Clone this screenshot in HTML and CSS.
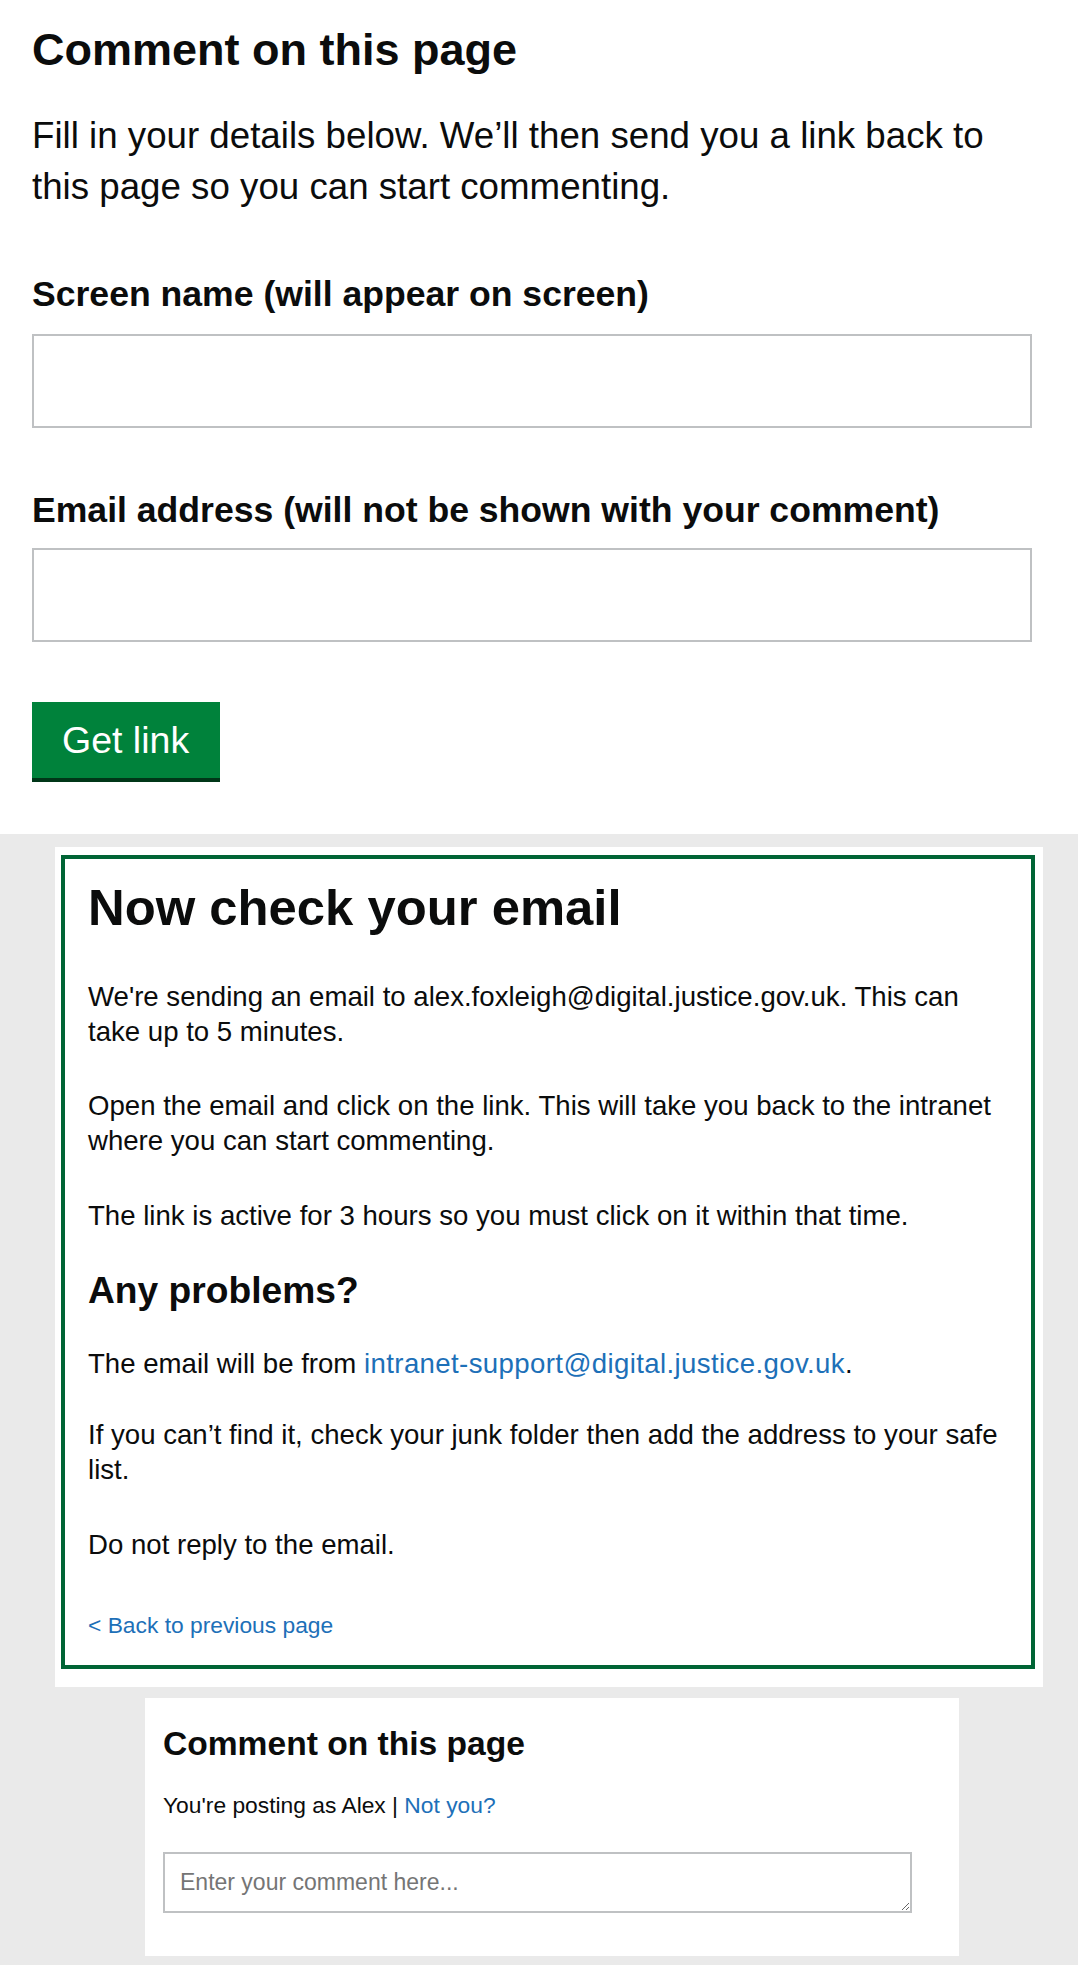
FILE: index.html
```html
<!DOCTYPE html>
<html lang="en">
<head>
<meta charset="utf-8">
<title>Comment on this page</title>
<link rel="stylesheet" href="styles.css">
</head>
<body>
<main>
  <section class="signin">
    <h1 class="signin-title">Comment on this page</h1>
    <p class="lead">Fill in your details below. We’ll then send you a link back to this page so you can start commenting.</p>
    <div class="field">
      <label class="field-label field-label--short" for="screen-name">Screen name (will appear on screen)</label>
      <input class="field-input" id="screen-name" type="text">
    </div>
    <div class="field">
      <label class="field-label field-label--long" for="email">Email address (will not be shown with your comment)</label>
      <input class="field-input field-input--tight" id="email" type="email">
    </div>
    <button class="btn" type="button">Get link</button>
  </section>

  <section class="grey-area">
    <div class="panel">
      <div class="notice">
        <h2 class="notice-title">Now check your email</h2>
        <p class="notice-text notice-text--first">We're sending an email to alex.foxleigh@digital.justice.gov.uk. This can take up to 5 minutes.</p>
        <p class="notice-text notice-text--p2">Open the email and click on the link. This will take you back to the intranet where you can start commenting.</p>
        <p class="notice-text notice-text--p3">The link is active for 3 hours so you must click on it within that time.</p>
        <h3 class="notice-subtitle">Any problems?</h3>
        <p class="notice-text notice-text--p4">The email will be from <a class="link link--email" href="#">intranet-support@digital.justice.gov.uk</a>.</p>
        <p class="notice-text notice-text--p5">If you can’t find it, check your junk folder then add the address to your safe list.</p>
        <p class="notice-text notice-text--p6">Do not reply to the email.</p>
        <a class="back-link" href="#">&lt; Back to previous page</a>
      </div>
    </div>

    <div class="comment-panel">
      <h2 class="comment-title">Comment on this page</h2>
      <p class="comment-user">You're posting as Alex | <a class="link" href="#">Not you?</a></p>
      <textarea class="comment-box" placeholder="Enter your comment here..."></textarea>
    </div>
  </section>
</main>
</body>
</html>
```

FILE: styles.css
```css
* {
  box-sizing: border-box;
}

html, body {
  margin: 0;
  padding: 0;
  background: #ffffff;
}

body {
  font-family: "Liberation Sans", Arial, sans-serif;
  color: #0b0c0c;
}

.signin {
  padding: 25px 0 56px 32px;
}

.signin-title {
  margin: 0;
  font-size: 45px;
  line-height: 50px;
  font-weight: 700;
}

.lead {
  margin: 35px 0 0;
  width: 975px;
  font-size: 36.7px;
  line-height: 51px;
}

.field {
  margin-top: 62px;
}

.field-label {
  display: block;
  font-size: 36px;
  line-height: 40px;
  font-weight: 700;
}

.field-label--short {
  font-size: 35.6px;
}

.field-label--long {
  font-size: 35.6px;
}

.field-input {
  display: block;
  width: 1000px;
  height: 94px;
  margin: 20px 0 0;
  border: 2px solid #bfc1c3;
  background: #ffffff;
  font-family: inherit;
  font-size: 30px;
  padding: 10px;
}

.field-input--tight {
  margin-top: 18px;
}

.btn {
  display: block;
  margin: 60px 0 0;
  padding: 18px 31px 18px 30px;
  border: 0;
  border-radius: 0;
  background: #00823b;
  color: #ffffff;
  font-family: inherit;
  font-size: 37.5px;
  line-height: 40px;
  box-shadow: 0 4px 0 #003618;
  cursor: pointer;
}

.grey-area {
  background: #eaeaea;
  padding: 13px 0 9px;
}

.panel {
  width: 988px;
  margin-left: 55px;
  padding: 8px 8px 18px 6px;
  background: #ffffff;
}

.notice {
  border: 4px solid #006435;
  padding: 21px 23px 25px;
}

.notice-title {
  margin: 0;
  font-size: 50.8px;
  line-height: 56px;
  font-weight: 700;
}

.notice-text {
  margin: 0;
  font-size: 27.6px;
  line-height: 35px;
}

.notice-text--first { margin-top: 43px; }
.notice-text--p2 { margin-top: 39px; }
.notice-text--p3 { margin-top: 40px; }
.notice-text--p4 { margin-top: 36px; }
.notice-text--p5 { margin-top: 36px; }
.notice-text--p6 { margin-top: 40px; }

.notice-subtitle {
  margin: 37px 0 0;
  font-size: 37.2px;
  line-height: 40px;
  font-weight: 700;
}

.link {
  color: #1d70b8;
  text-decoration: none;
}

.link--email {
  letter-spacing: 0.38px;
}

.back-link {
  display: block;
  margin-top: 48px;
  font-size: 22.8px;
  line-height: 30px;
  color: #1d70b8;
  text-decoration: none;
}

.comment-panel {
  width: 814px;
  margin: 11px 0 0 145px;
  padding: 26px 18px 43px;
  background: #ffffff;
}

.comment-title {
  margin: 0;
  font-size: 33.6px;
  line-height: 40px;
  font-weight: 700;
}

.comment-user {
  margin: 26px 0 0;
  font-size: 22.8px;
  line-height: 30px;
}

.comment-box {
  display: block;
  width: 749px;
  height: 61px;
  margin: 32px 0 0;
  padding: 13px 13px 12px 15px;
  border: 2px solid #bfc1c3;
  border-radius: 0;
  font-family: inherit;
  font-size: 23px;
  line-height: 30px;
  color: #0b0c0c;
  resize: vertical;
}

.comment-box::placeholder {
  color: #757575;
  opacity: 1;
}
```
